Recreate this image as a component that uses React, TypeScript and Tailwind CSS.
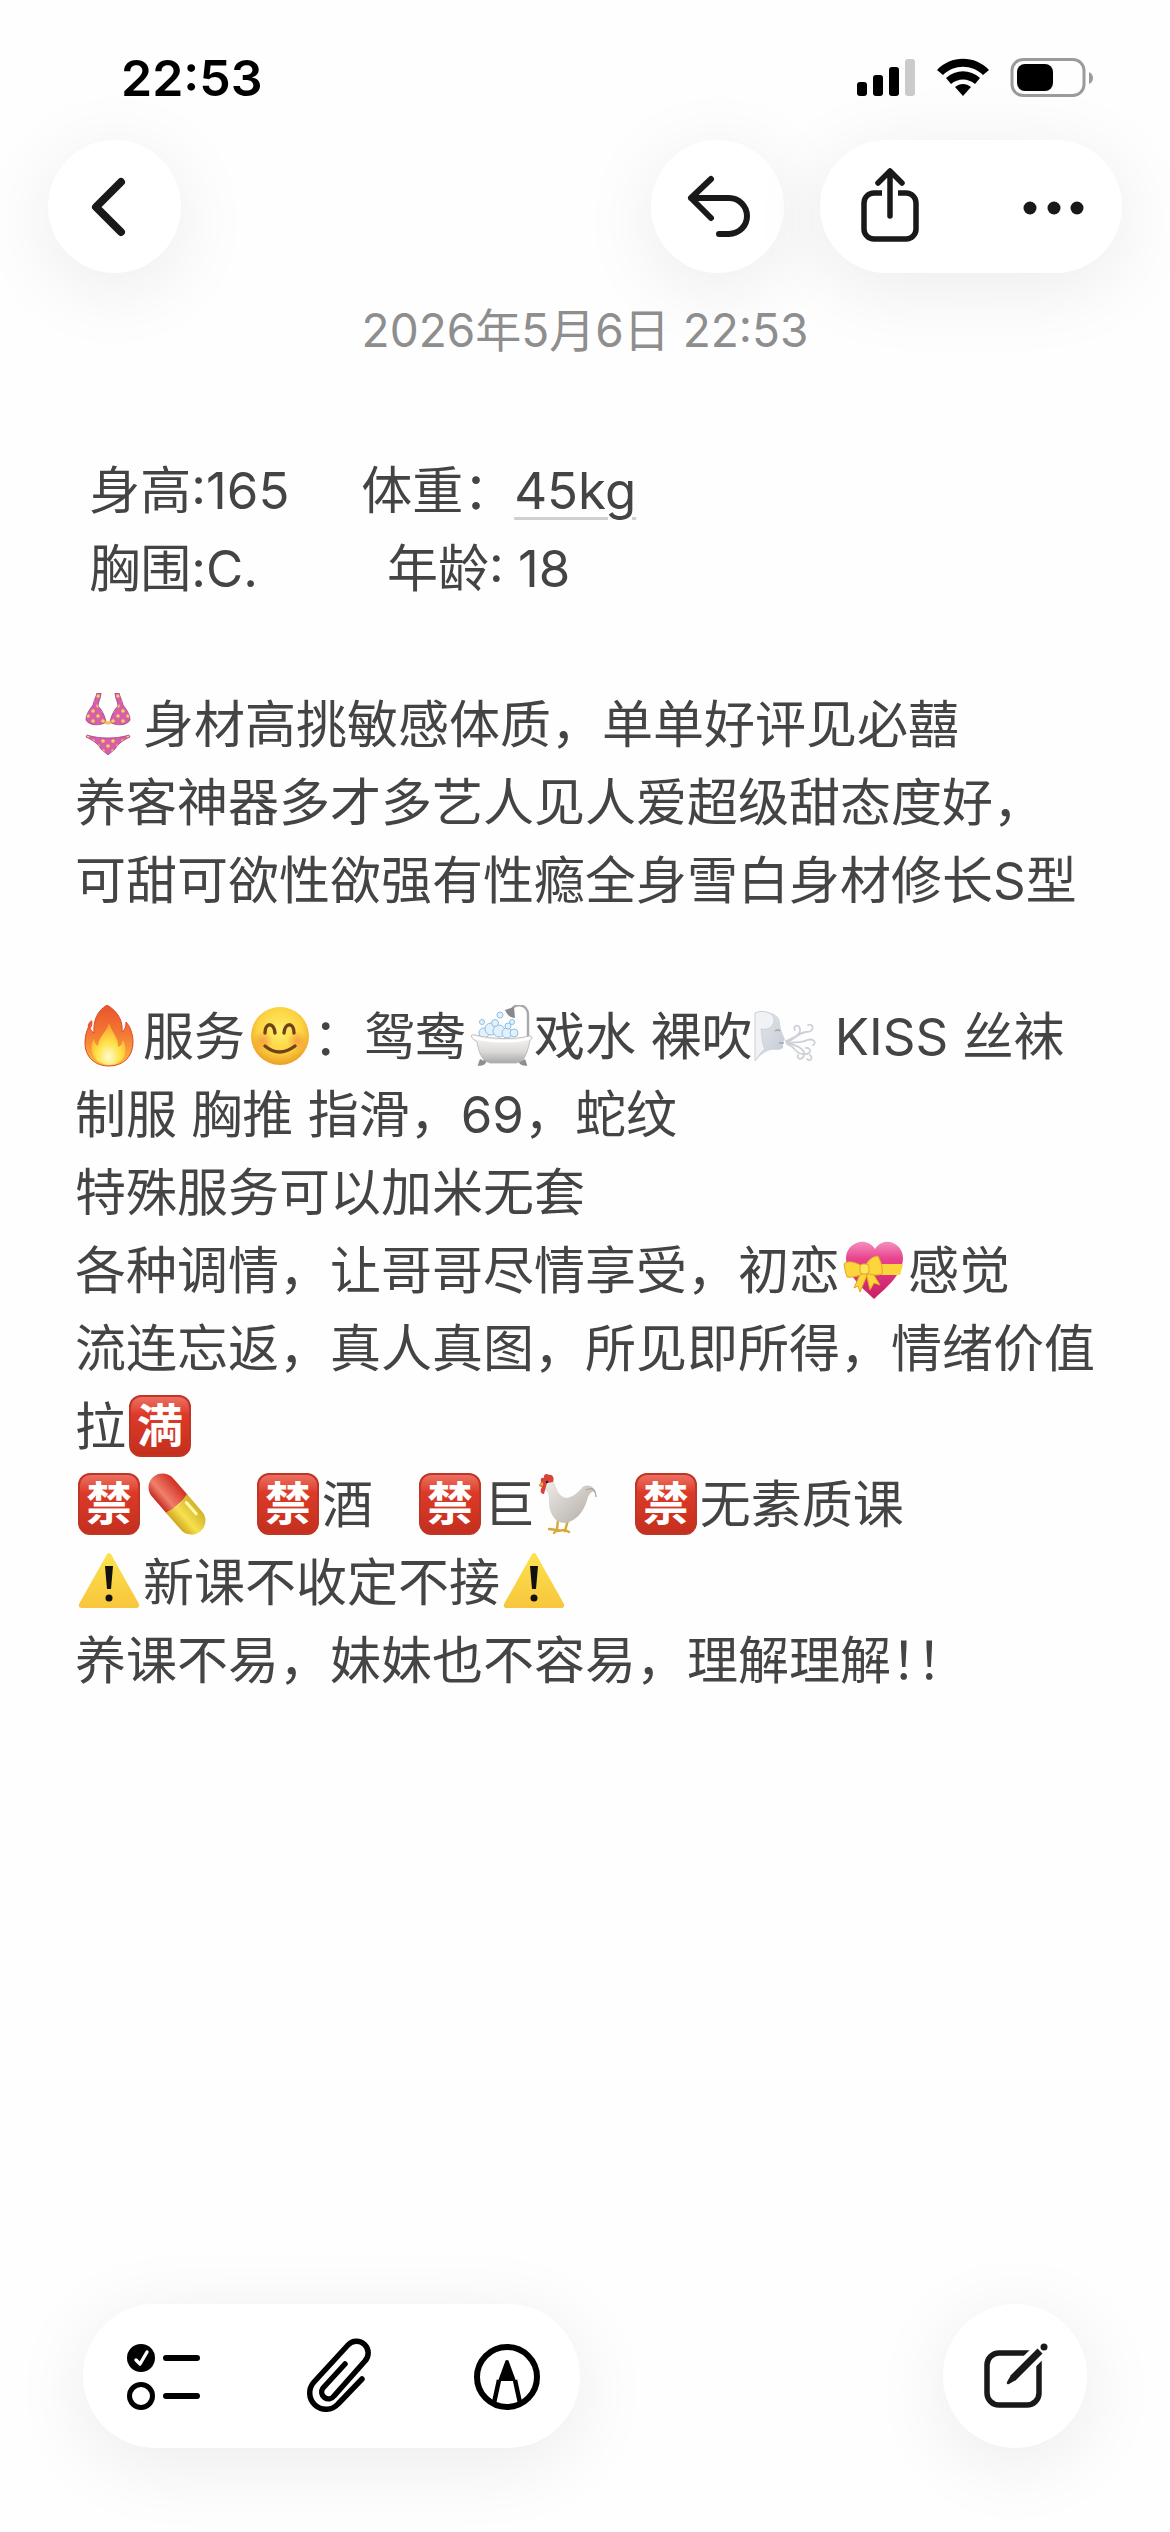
import type { ReactNode } from "react";

const glyph = "inline-block h-[62px] w-[68px] align-[-12px]";

function Drawing({ label, children }: { label: string; children: ReactNode }) {
  return (
    <svg className={glyph} viewBox="0 0 68 62" role="img" aria-label={label}>
      {children}
    </svg>
  );
}

function Bikini() {
  return (
    <Drawing label="👙">
      <defs>
        <pattern id="dots" width="10" height="10" patternUnits="userSpaceOnUse">
          <rect width="10" height="10" fill="#d65fa9" />
          <circle cx="3" cy="3" r="1.8" fill="#f7d35c" />
          <circle cx="8" cy="8" r="1.8" fill="#f7d35c" />
        </pattern>
      </defs>
      <g fill="url(#dots)" stroke="#a83c86" strokeWidth="0.8">
        <path d="M22 0h4c0 5-3 9-3 13 4 4 7 10 8 16-5 4-17 4-20-2 0-6 4-11 7-15 1-5 3-8 4-12z" />
        <path d="M40 0h4c1 4 3 7 4 12 3 4 7 9 7 15-3 6-15 6-20 2 1-6 4-12 8-16 0-4-3-8-3-13z" />
        <path d="M12 42c12 4 30 4 42 0l1 2c-7 3-12 7-15 12l-7 6-7-6c-3-5-8-9-15-12z" />
      </g>
      <path d="M30 29q3 2 6 0" stroke="#f0c04c" strokeWidth="3" fill="none" />
    </Drawing>
  );
}

function Fire() {
  return (
    <Drawing label="🔥">
      <defs>
        <linearGradient id="flame" x1="0" y1="0" x2="0" y2="1">
          <stop offset="0" stopColor="#e8542c" />
          <stop offset="0.5" stopColor="#f47a35" />
          <stop offset="1" stopColor="#fbbf3a" />
        </linearGradient>
        <radialGradient id="ember" cx="0.5" cy="0.8" r="0.7">
          <stop offset="0" stopColor="#fffbd0" />
          <stop offset="0.5" stopColor="#ffe245" />
          <stop offset="1" stopColor="#fba734" />
        </radialGradient>
      </defs>
      <path d="M32 0c12 7 16 17 15 27 3-2 4-5 4-10 4 4 7 12 7 20 0 15-10 24-24 24S10 52 10 38c0-8 2-13 4-17 1 3 2 5 5 7-1-12 3-22 13-28z" fill="url(#flame)" stroke="#e2472d" strokeWidth="1" />
      <path d="M17 15c-5 3-5 7-3 9 3-1 4-5 3-9z" fill="#ec5a36" />
      <path d="M34 18c-2 9-11 14-11 23-2-1-4-4-4-7-4 6-5 24 15 26 19-1 18-17 14-25-1 4-2 6-5 7 1-9-6-14-9-24z" fill="url(#ember)" />
    </Drawing>
  );
}

function Smile() {
  return (
    <Drawing label="😊">
      <defs>
        <radialGradient id="face" cx="0.5" cy="0.4" r="0.6">
          <stop offset="0" stopColor="#fff06a" />
          <stop offset="0.65" stopColor="#fcd23f" />
          <stop offset="1" stopColor="#eb9d26" />
        </radialGradient>
        <radialGradient id="blush">
          <stop offset="0" stopColor="#ee6b3a" stopOpacity="0.5" />
          <stop offset="1" stopColor="#ee6b3a" stopOpacity="0" />
        </radialGradient>
      </defs>
      <circle cx="35" cy="31" r="29" fill="url(#face)" />
      <circle cx="18" cy="36" r="10" fill="url(#blush)" />
      <circle cx="52" cy="36" r="10" fill="url(#blush)" />
      <g fill="none" stroke="#70421b" strokeWidth="3.4" strokeLinecap="round">
        <path d="M20 28c0-11 9-11 10 0M39 28c1-11 10-11 10 0" />
        <path d="M20 41q14 12 30 0" />
      </g>
    </Drawing>
  );
}

function Bathtub() {
  return (
    <Drawing label="🛁">
      <defs>
        <linearGradient id="tub" x1="0" y1="0" x2="0" y2="1">
          <stop offset="0" stopColor="#fafafa" />
          <stop offset="0.6" stopColor="#dcdad8" />
          <stop offset="1" stopColor="#aaa8a6" />
        </linearGradient>
      </defs>
      <path d="M62 34V10C62-2 47-2 46 5" fill="none" stroke="#a6a8aa" strokeWidth="2.4" />
      <path d="M39 5l9-3 1 11c-4 0-8-3-10-8z" fill="#88898c" />
      <g fill="#e2f1fb" stroke="#8dbfe2" strokeWidth="1">
        <circle cx="18" cy="28" r="5" />
        <circle cx="25" cy="24" r="6" />
        <circle cx="33" cy="26" r="6" />
        <circle cx="41" cy="28" r="5" />
        <circle cx="48" cy="28" r="4" />
        <circle cx="29" cy="18" r="3.5" />
        <circle cx="42" cy="21" r="3" />
        <circle cx="34" cy="10" r="3" />
        <circle cx="16" cy="17" r="2.5" />
        <circle cx="46" cy="17" r="2.5" />
      </g>
      <g fill="none" stroke="#8e8e90" strokeWidth="3.4" strokeLinecap="round">
        <path d="M20 53q-1 6-6 6l1-3M53 53q1 6 6 6l-1-3" />
      </g>
      <path d="M5 31q1-2 4-1c15 4 40 5 54 1 4 0 4 3 1 4-3 15-6 22-14 23H24C16 56 13 48 11 37q-5-3-6-6z" fill="url(#tub)" stroke="#b2b0af" strokeWidth="0.8" />
      <path d="M7 32c14 5 43 6 57 1" fill="none" stroke="#fff" strokeWidth="2.4" />
    </Drawing>
  );
}

function WindFace() {
  return (
    <Drawing label="🌬️">
      <defs>
        <linearGradient id="wind" x1="0" y1="0" x2="1" y2="1">
          <stop offset="0" stopColor="#e6e9ee" />
          <stop offset="1" stopColor="#c3c9d2" />
        </linearGradient>
      </defs>
      <path d="M3 8h8c8-3 18 3 17 11l1 5c1 4 3 8 4 11l-2 2v6c-4 3-9 1-12 2C14 46 8 50 3 56z" fill="url(#wind)" />
      <path d="M3 8c5-3 18-2 19 6 1 7-6 12-13 10 2 7 0 12 4 20-4 3-7 8-10 12z" fill="#f0f2f5" stroke="#ccd0d7" strokeWidth="1" />
      <path d="M23 26q3-2 5 0M27 38h5" fill="none" stroke="#9fa7b2" strokeWidth="1.4" />
      <g fill="none" stroke="#cdd1d7" strokeWidth="1.8" strokeLinecap="round">
        <path d="M34 37C44 35 44 28 54 27c9 0 8-9 2-7M34 36c7-3 15-6 14-12s-8-3-5 1M35 38c10-1 16 0 20-3 7-2 10 3 6 5M35 39c9 3 8 10 16 10 10 1 8-7 3-6M36 38c9 3 13 4 16 9 1 9-8 8-6 3M58 50c4 4-1 7-3 4" />
      </g>
    </Drawing>
  );
}

function RibbonHeart() {
  return (
    <Drawing label="💝">
      <defs>
        <linearGradient id="heart" x1="0" y1="0" x2="0" y2="1">
          <stop offset="0" stopColor="#f590bd" />
          <stop offset="0.3" stopColor="#e8428e" />
          <stop offset="1" stopColor="#c81e62" />
        </linearGradient>
      </defs>
      <path d="M34 60C22 49 6 35 6 19 6 4 26-4 35 10 44-4 63 4 63 19c0 16-17 30-29 41z" fill="url(#heart)" />
      <path d="M32 25h31l-3 11H32z" fill="#fbd53b" />
      <g fill="#fcd63c" stroke="#e0a526" strokeWidth="1">
        <path d="M21 33l-7 16 4-2 2 6 8-19zM26 34l4 17 4-7 6 2-9-15z" />
        <path d="M22 27C16 23 7 21 4 25c1 4 1 8 3 13 6 1 12-1 17-4z" />
        <path d="M26 26c2-5 7-9 12-9 3 6 5 11 4 18-5 2-11 1-15-1z" />
        <rect x="20" y="25" width="9" height="10" rx="3" fill="#ffe35c" />
      </g>
    </Drawing>
  );
}

function Pill() {
  return (
    <Drawing label="💊">
      <defs>
        <linearGradient id="capTop" x1="0" y1="0" x2="1" y2="0">
          <stop offset="0" stopColor="#c52a1e" />
          <stop offset="0.35" stopColor="#f0806c" />
          <stop offset="1" stopColor="#d22f22" />
        </linearGradient>
        <linearGradient id="capEnd" x1="0" y1="0" x2="1" y2="0">
          <stop offset="0" stopColor="#d0a71f" />
          <stop offset="0.4" stopColor="#f7e04e" />
          <stop offset="1" stopColor="#cfb42a" />
        </linearGradient>
      </defs>
      <g transform="rotate(-41 34 31)">
        <path d="M20 32V9a14 14 0 0 1 28 0v23z" fill="url(#capTop)" />
        <path d="M20 30q14 5 28 0v23a14 14 0 0 1-28 0z" fill="url(#capEnd)" />
        <path d="M42 36v15" stroke="#fff9b0" strokeWidth="3" strokeLinecap="round" />
      </g>
    </Drawing>
  );
}

function Rooster() {
  return (
    <Drawing label="🐔">
      <defs>
        <linearGradient id="feather" x1="0" y1="0" x2="1" y2="1">
          <stop offset="0" stopColor="#f2efeb" />
          <stop offset="1" stopColor="#b0aaa3" />
        </linearGradient>
      </defs>
      <path d="M23 47l-1 10m-8-1l8 1-3 3m14-13l-3 11m-9 0l9-1 4 2" fill="none" stroke="#d8a63a" strokeWidth="2.4" strokeLinecap="round" />
      <path d="M9 8c3-4 8-5 10 1 3 7 4 14 12 16 7-1 11-5 15-9 4-6 13-4 15 4-4-3-6 0-8 4-3 12-10 24-23 26-10 0-15-9-16-19 0-8 0-12-5-15z" fill="url(#feather)" />
      <path d="M51 17q9-5 10 7" fill="none" stroke="#aaa49c" strokeWidth="1.2" />
      <path d="M6 9c-1-4 1-5 3-4-1-4 3-5 5-3 3-1 6 3 4 7l-6 1-3 11c-4 0-4-4-2-7l-3-1z" fill="#d9423a" />
      <circle cx="12" cy="9" r="1.3" fill="#222" />
      <path d="M8 9l-5 3 5 1z" fill="#e6b33c" />
    </Drawing>
  );
}

function Warning() {
  return (
    <Drawing label="⚠️">
      <defs>
        <linearGradient id="warn" x1="0" y1="0" x2="0" y2="1">
          <stop offset="0" stopColor="#fce24f" />
          <stop offset="1" stopColor="#f8c63c" />
        </linearGradient>
      </defs>
      <path d="M34 2q2 0 3 3l27 48q1 4-3 4H7q-4 0-3-4L31 5q1-3 3-3z" fill="url(#warn)" />
      <path d="M30 15h8l-2 23h-4z" fill="#111" />
      <circle cx="34" cy="47" r="3.5" fill="#111" />
    </Drawing>
  );
}

function RedSeal({ children }: { children: string }) {
  return (
    <span className="mx-[3px] inline-block h-[62px] w-[62px] overflow-hidden rounded-[12px] border-2 border-[#bf3526] bg-linear-to-b from-[#ec6f60] via-[#dd3a28] via-30% to-[#c42f1e] text-center align-[-12px] text-[46px] leading-[56px] font-bold text-white">
      {children}
    </span>
  );
}

function StatusBar() {
  return (
    <header className="flex h-[140px] items-center justify-between pt-4 pr-[76px] pl-[121px]">
      <time className="text-[50px] leading-[60px] font-semibold text-black">22:53</time>
      <div className="flex items-center gap-[21px]">
        <svg className="h-10 w-[60px]" viewBox="0 0 60 40" role="img" aria-label="Signal">
          <rect x="1" y="24" width="10" height="14" rx="3" />
          <rect x="17" y="17" width="10" height="21" rx="3" />
          <rect x="33" y="9" width="10" height="29" rx="3" />
          <rect x="49" y="1" width="10" height="37" rx="3" fill="#cbcbcb" />
        </svg>
        <svg className="h-10 w-[52px]" viewBox="0 0 52 40" role="img" aria-label="Wi-Fi">
          <path d="M0 12C14-3 38-3 52 12l-6 5C35 6 17 6 6 17z" />
          <path d="M9 20c10-9 24-9 34 0l-5 6c-7-6-17-6-24 0z" />
          <path d="M18 29c5-4 11-4 16 0l-8 9z" />
        </svg>
        <svg className="h-10 w-[84px]" viewBox="0 0 84 40" role="img" aria-label="Battery">
          <rect x="2" y="1.5" width="72" height="36" rx="11" fill="none" stroke="#9b9b9b" strokeWidth="3" />
          <rect x="7" y="6" width="36" height="27" rx="8" />
          <path d="M79 14q4 2 4 6t-4 6z" fill="#9b9b9b" />
        </svg>
      </div>
    </header>
  );
}

const shadow = "bg-white shadow-[0_14px_80px_rgba(0,0,0,0.08)]";
const line = "fill-none stroke-[#191919] [stroke-linecap:round] [stroke-linejoin:round]";

function TopBar() {
  return (
    <nav className="flex items-center pr-12 pl-12">
      <button aria-label="Back" className={`flex size-[133px] items-center justify-center rounded-full ${shadow}`}>
        <svg className="size-[66px]" viewBox="0 0 66 66">
          <path className={line} strokeWidth="8" d="M39 8L14 33l25 25" />
        </svg>
      </button>
      <button aria-label="Undo" className={`ml-auto flex size-[133px] items-center justify-center rounded-full ${shadow}`}>
        <svg className="size-[66px]" viewBox="0 0 66 66">
          <path className={line} strokeWidth="6" d="M26 5L6 24l20 20M6 24h38a17 17 0 0 1 0 36H34" />
        </svg>
      </button>
      <div className={`ml-9 flex h-[133px] w-[302px] items-center justify-between rounded-full pr-[36px] pl-[37px] ${shadow}`}>
        <button aria-label="Share">
          <svg className="h-20 w-[66px]" viewBox="0 0 66 80">
            <path className={line} strokeWidth="5.5" d="M33 49V5M21 16L33 4l12 12" />
            <path d="M25 26h-8a10 10 0 0 0-10 10v26a10 10 0 0 0 10 10h32a10 10 0 0 0 10-10V36a10 10 0 0 0-10-10h-8" fill="none" stroke="#191919" strokeWidth="5.5" />
          </svg>
        </button>
        <button aria-label="More">
          <svg className="h-20 w-[66px]" viewBox="0 0 66 80" fill="#191919">
            <circle cx="10" cy="41" r="6.5" />
            <circle cx="34" cy="41" r="6.5" />
            <circle cx="57" cy="41" r="6.5" />
          </svg>
        </button>
      </div>
    </nav>
  );
}

function Toolbar() {
  return (
    <footer className="mt-auto flex items-center justify-between px-[83px] pb-[84px]">
      <div className={`flex h-[144px] w-[497px] items-center justify-between rounded-full px-[37px] ${shadow}`}>
        <button aria-label="Checklist">
          <svg className="size-20" viewBox="0 0 80 80" fill="none" stroke="#000" strokeLinecap="round">
            <circle cx="21" cy="22" r="14" fill="#000" stroke="none" />
            <path d="M16 24l4 4 7-12" stroke="#fff" strokeWidth="3.4" strokeLinejoin="round" />
            <circle cx="21" cy="60" r="11.5" strokeWidth="5" />
            <path d="M46 22h31M46 60h31" strokeWidth="6" />
          </svg>
        </button>
        <button aria-label="Attach">
          <svg className="size-20" viewBox="0 0 80 80">
            <path transform="translate(8 0)" d="M62 43L38 68a15.500 15.500 0 0 1-24-22L48 9a11 11 0 0 1 17 16L34 60a6 6 0 0 1-11-8l22-24" fill="none" stroke="#000" strokeWidth="5.500" strokeLinecap="round" strokeLinejoin="round" />
          </svg>
        </button>
        <button aria-label="Markup">
          <svg className="size-20" viewBox="0 0 80 80">
            <g transform="translate(-3 0)">
              <circle cx="47" cy="41" r="30" fill="none" stroke="#000" strokeWidth="6" />
              <path d="M47 24q2 0 2 2l7 19H38l7-19q0-2 2-2z" />
              <path d="M39 44l-5 23M55 44l5 23" fill="none" stroke="#000" strokeWidth="4.500" />
            </g>
          </svg>
        </button>
      </div>
      <button aria-label="New note" className={`flex size-[144px] items-center justify-center rounded-full ${shadow}`}>
        <svg className="size-20" viewBox="0 0 80 80" fill="none" stroke="#191919">
          <path d="M56 17H24a12 12 0 0 0-12 12v28a12 12 0 0 0 12 12h28a12 12 0 0 0 12-12V25" strokeWidth="5.5" />
          <path d="M72 8L36 44" stroke="#fff" strokeWidth="16" />
          <path d="M65 15L38 42" strokeWidth="7" />
          <path d="M36 39l5 5-7 4q-3 1-2-2z" fill="#191919" stroke="none" />
          <circle cx="69" cy="11" r="3.5" fill="#191919" stroke="none" />
        </svg>
      </button>
    </footer>
  );
}

export default function App() {
  return (
    <div className="flex min-h-screen flex-col bg-[#fefefe] font-[Inter,'Noto_Sans_CJK_SC',sans-serif]" lang="zh-CN">
      <StatusBar />
      <TopBar />
      <time className="mt-[27px] text-center text-[46px] leading-[60px] text-[#8e8e8e]">2026年5月6日 22:53</time>
      <main className="mt-[92px] pr-[60px] pl-[75px] text-[51px] leading-[78px] whitespace-pre-wrap text-[#444]">
        <p>
          {" 身高:165     体重："}
          <a href="#weight" className="underline decoration-[#d0d0d0] decoration-3 underline-offset-8">45kg</a>
        </p>
        <p>{" 胸围:C.         年龄: 18"}</p>
        <p><br /></p>
        <p><Bikini />身材高挑敏感体质，单单好评见必囍</p>
        <p>养客神器多才多艺人见人爱超级甜态度好，</p>
        <p>可甜可欲性欲强有性瘾全身雪白身材修长S型</p>
        <p><br /></p>
        <p><Fire />服务<Smile />：鸳鸯<Bathtub />戏水 裸吹<WindFace /> KISS 丝袜</p>
        <p>制服 胸推 指滑，69，蛇纹</p>
        <p>特殊服务可以加米无套</p>
        <p>各种调情，让哥哥尽情享受，初恋<RibbonHeart />感觉</p>
        <p>流连忘返，真人真图，所见即所得，情绪价值拉<RedSeal>満</RedSeal></p>
        <p>
          <RedSeal>禁</RedSeal><Pill />{"   "}<RedSeal>禁</RedSeal>{"酒   "}<RedSeal>禁</RedSeal>巨<Rooster />{"  "}<RedSeal>禁</RedSeal>无素质课
        </p>
        <p><Warning />新课不收定不接<Warning /></p>
        <p>养课不易，妹妹也不容易，理解理解<span className="[font-feature-settings:'halt']">！！</span></p>
      </main>
      <Toolbar />
    </div>
  );
}
